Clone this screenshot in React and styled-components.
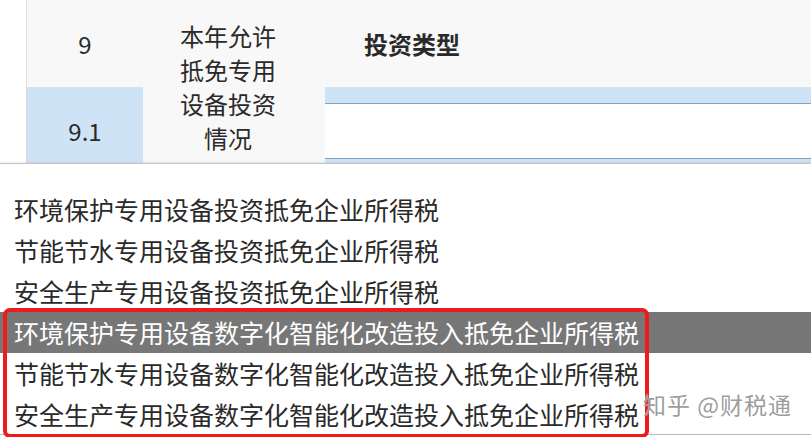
import React from 'react';
import styled, { createGlobalStyle } from 'styled-components';

const GlobalStyle = createGlobalStyle`
  body {
    margin: 0;
    overflow: hidden;
    background: #fff;
    font-family: 'Noto Sans CJK SC', 'Noto Sans', sans-serif;
  }
`;

const Page = styled.div`
  width: 811px;
  height: 437px;
  position: relative;
  display: flex;
  flex-direction: column;
  background: #fff;
  overflow: hidden;
`;

const TableArea = styled.div`
  height: 163px;
  display: flex;
`;

const Gutter = styled.div`
  width: 26px;
  background: #fff;
  border-right: 1px solid #dcdcdc;
`;

const Grid = styled.div`
  flex: 1;
  display: grid;
  grid-template-columns: 116px 182px 1fr;
  grid-template-rows: 87px 76px;
  background: #f8f8f8;
`;

const NumCell = styled.div`
  display: flex;
  justify-content: center;
  align-items: ${(p) => (p.$low ? 'flex-start' : 'center')};
  padding-top: ${(p) => (p.$low ? '27px' : '0')};
  font-size: 24px;
  line-height: 34px;
  color: #2a2a2a;
  background: ${(p) => (p.$selected ? '#cfe3f7' : '#f8f8f8')};
`;

const LabelCell = styled.div`
  grid-row: 1 / span 2;
  grid-column: 2;
  padding: 19px 12px 0 0;
  text-align: center;
  font-size: 24px;
  line-height: 34px;
  color: #2a2a2a;
`;

const HeadCell = styled.div`
  display: flex;
  align-items: center;
  padding-left: 39px;
  font-size: 24px;
  font-weight: 700;
  color: #2a2a2a;
`;

const InputCell = styled.div`
  background: #cfe3f7;
  padding-top: 16px;
`;

const InputBox = styled.div`
  height: 54px;
  background: #fff;
  border-top: 1px solid #7ba4c9;
  border-bottom: 1px solid #7ba4c9;
`;

const Dropdown = styled.ul`
  list-style: none;
  margin: 0;
  padding: 25px 0 0;
  height: 245px;
  border-top: 1px solid #c4c4c4;
  border-bottom: 1px solid #b8b8b8;
  box-shadow: 0 -1px 2px rgba(0, 0, 0, 0.08);
  background: #fff;
`;

const Option = styled.li`
  height: 41px;
  line-height: 41px;
  padding-left: 14px;
  font-size: 25px;
  white-space: nowrap;
  color: ${(p) => (p.$active ? '#fff' : '#2a2a2a')};
  background: ${(p) => (p.$active ? '#777' : 'transparent')};
`;

const Marked = styled.div`
  position: relative;

  &::after {
    content: '';
    position: absolute;
    left: 3px;
    top: -4px;
    width: 646px;
    height: 130px;
    box-sizing: border-box;
    border: 4px solid #ec1c1c;
    border-radius: 7px;
    pointer-events: none;
  }
`;

const Watermark = styled.div`
  position: absolute;
  left: 643px;
  top: 387px;
  font-size: 23px;
  letter-spacing: 1px;
  color: rgba(130, 130, 130, 0.8);
  text-shadow: 0 0 1px #fff;
  white-space: nowrap;
`;

const plain = [
  '环境保护专用设备投资抵免企业所得税',
  '节能节水专用设备投资抵免企业所得税',
  '安全生产专用设备投资抵免企业所得税',
];

const digital = [
  '环境保护专用设备数字化智能化改造投入抵免企业所得税',
  '节能节水专用设备数字化智能化改造投入抵免企业所得税',
  '安全生产专用设备数字化智能化改造投入抵免企业所得税',
];

export default function App() {
  return (
    <Page>
      <GlobalStyle />
      <TableArea>
        <Gutter />
        <Grid>
          <NumCell>9</NumCell>
          <LabelCell>
            本年允许<br />抵免专用<br />设备投资<br />情况
          </LabelCell>
          <HeadCell>投资类型</HeadCell>
          <NumCell $selected $low>9.1</NumCell>
          <InputCell>
            <InputBox />
          </InputCell>
        </Grid>
      </TableArea>
      <Dropdown>
        {plain.map((t) => (
          <Option key={t}>{t}</Option>
        ))}
        <Marked>
          {digital.map((t, i) => (
            <Option key={t} $active={i === 0}>{t}</Option>
          ))}
        </Marked>
      </Dropdown>
      <Watermark>知乎 @财税通</Watermark>
    </Page>
  );
}
